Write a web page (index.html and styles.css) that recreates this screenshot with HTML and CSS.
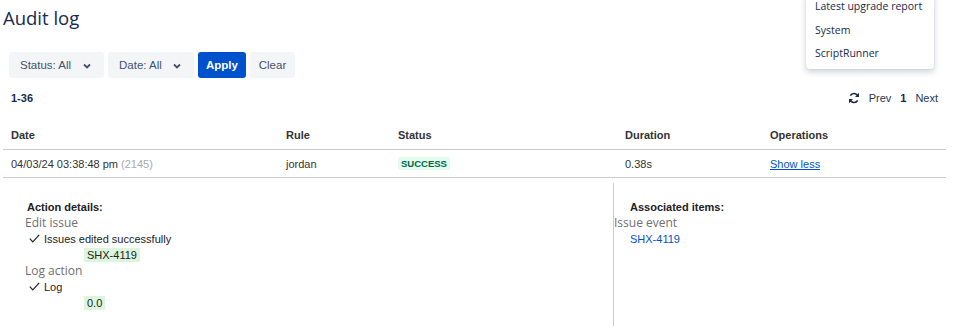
FILE: index.html
```html
<!DOCTYPE html>
<html lang="en">
<head>
    <meta charset="UTF-8">
    <meta name="viewport" content="width=device-width, initial-scale=1.0">
    <title>Audit log</title>
    <link rel="stylesheet" href="styles.css">
</head>
<body>
    <div class="page">
        <h1 class="page-title">Audit log</h1>

        <!-- Menu yang masih terbuka dari header -->
        <div class="menu">
            <div class="menu-item">Latest upgrade report</div>
            <div class="menu-item">System</div>
            <div class="menu-item">ScriptRunner</div>
        </div>

        <div class="filters">
            <button class="filter-btn status-btn">Status: All
                <svg class="chevron" width="8" height="6" viewBox="0 0 8 6"><polyline points="1,1.5 4,4.5 7,1.5" fill="none" stroke="#42526e" stroke-width="1.8"/></svg>
            </button>
            <button class="filter-btn date-btn">Date: All
                <svg class="chevron" width="8" height="6" viewBox="0 0 8 6"><polyline points="1,1.5 4,4.5 7,1.5" fill="none" stroke="#42526e" stroke-width="1.8"/></svg>
            </button>
            <button class="apply-btn">Apply</button>
            <button class="clear-btn">Clear</button>
        </div>

        <div class="pager-row">
            <span class="count">1-36</span>
            <div class="pager">
                <svg class="refresh" width="12" height="12" viewBox="0 0 12 12">
                    <path d="M10 4.2A4.3 4.3 0 0 0 2.3 3.6" fill="none" stroke="#172b4d" stroke-width="1.7"/>
                    <path d="M2 7.8A4.3 4.3 0 0 0 9.7 8.4" fill="none" stroke="#172b4d" stroke-width="1.7"/>
                    <polygon points="11,0.8 11,5 7,5" fill="#172b4d"/>
                    <polygon points="1,11.2 1,7 5,7" fill="#172b4d"/>
                </svg>
                <span>Prev</span>
                <span class="current">1</span>
                <span>Next</span>
            </div>
        </div>

        <table class="log-table">
            <colgroup>
                <col style="width: 275px">
                <col style="width: 112px">
                <col style="width: 227px">
                <col style="width: 145px">
                <col>
            </colgroup>
            <thead>
                <tr>
                    <th>Date</th>
                    <th>Rule</th>
                    <th>Status</th>
                    <th>Duration</th>
                    <th>Operations</th>
                </tr>
            </thead>
            <tbody>
                <tr>
                    <td>04/03/24 03:38:48 pm <span class="run-id">(2145)</span></td>
                    <td>jordan</td>
                    <td><span class="lozenge">Success</span></td>
                    <td>0.38s</td>
                    <td><a href="#" class="toggle-link">Show less</a></td>
                </tr>
            </tbody>
        </table>

        <div class="details">
            <div class="details-left">
                <div class="details-heading">Action details:</div>
                <div class="action-name">Edit issue</div>
                <div class="action-result">
                    <svg width="11" height="9" viewBox="0 0 11 9"><polyline points="0.8,4.6 3.8,7.8 10.2,0.8" fill="none" stroke="#222" stroke-width="1.2"/></svg>
                    <span>Issues edited successfully</span>
                </div>
                <div class="action-value"><span class="value-chip">SHX-4119</span></div>
                <div class="action-name">Log action</div>
                <div class="action-result">
                    <svg width="11" height="9" viewBox="0 0 11 9"><polyline points="0.8,4.6 3.8,7.8 10.2,0.8" fill="none" stroke="#222" stroke-width="1.2"/></svg>
                    <span>Log</span>
                </div>
                <div class="action-value"><span class="value-chip">0.0</span></div>
            </div>
            <div class="details-right">
                <div class="details-heading assoc-heading">Associated items:</div>
                <div class="action-name">Issue event</div>
                <a href="#" class="issue-link">SHX-4119</a>
            </div>
        </div>
    </div>
</body>
</html>
```

FILE: styles.css
```css
* { margin: 0; padding: 0; box-sizing: border-box; }
body {
    font-family: "Liberation Sans", Arial, sans-serif;
    font-size: 11px;
    color: #333;
    background: #fff;
}
.page { position: relative; padding: 0 14px 0 3px; }

.page-title {
    font-family: "Open Sans", "Noto Sans", sans-serif;
    font-weight: 400;
    font-size: 18.5px;
    line-height: 24px;
    color: #172b4d;
    padding-top: 6px;
}

/* menu dropdown di pojok kanan atas */
.menu {
    position: absolute;
    top: -7px;
    left: 806px;
    width: 128px;
    padding: 2px 0 3px;
    background: #fff;
    border-radius: 3px;
    box-shadow: 0 3px 6px rgba(9, 30, 66, 0.2), 0 0 1px rgba(9, 30, 66, 0.25);
}
.menu-item {
    font-family: "Open Sans", "Noto Sans", sans-serif;
    font-size: 10.5px;
    line-height: 23.5px;
    color: #172b4d;
    padding-left: 9px;
}

.filters { display: flex; gap: 4px; margin-top: 22px; padding-left: 6px; }
.filters button {
    font-family: "Liberation Sans", Arial, sans-serif;
    font-size: 11.5px;
    height: 26px;
    border: none;
    border-radius: 3px;
    cursor: pointer;
}
.filter-btn {
    display: flex;
    align-items: center;
    justify-content: space-between;
    background: #f4f5f7;
    color: #42526e;
    padding: 0 13px 0 11px;
}
.status-btn { width: 95px; }
.date-btn { width: 86px; }
.chevron { margin-top: 1px; }
.apply-btn { background: #0052cc; color: #fff; font-weight: bold; padding: 0; width: 48px; }
.clear-btn { background: #f4f5f7; color: #42526e; padding: 0; width: 45px; }

.pager-row {
    display: flex;
    justify-content: space-between;
    align-items: center;
    height: 20px;
    margin-top: 10px;
    padding-left: 8px;
}
.count { font-weight: bold; color: #172b4d; }
.pager { display: flex; align-items: center; gap: 9px; color: #253858; padding-right: 8px; }
.pager .current { font-weight: bold; color: #172b4d; }

.log-table { width: 943px; border-collapse: collapse; margin-top: 13px; table-layout: fixed; }
.log-table th, .log-table td { text-align: left; padding: 0 8px; height: 28px; vertical-align: middle; }
.log-table th { font-weight: bold; color: #333; border-bottom: 1px solid #ccc; padding-top: 1px; }
.log-table td { border-bottom: 1px solid #ccc; color: #333; padding-top: 1px; }
.run-id { color: #aaa; }
.lozenge {
    display: inline-block;
    background: #e3fcef;
    color: #006644;
    font-weight: bold;
    font-size: 9.5px;
    text-transform: uppercase;
    padding: 1px 3px 0;
    line-height: 12px;
    border-radius: 3px;
}
.toggle-link { color: #0052cc; text-decoration: underline; }

.details { display: grid; grid-template-columns: 610px 1fr; padding-top: 5px; }
.details-left { padding: 16px 0 15px 22px; }
.details-right { border-left: 1px solid #ccc; padding: 16px 0 0 0; }
.details-heading { font-weight: bold; color: #222; line-height: 16px; padding-left: 2px; font-size: 11px; }
.assoc-heading { padding-left: 16px; }
.action-name {
    font-family: "Open Sans", "Noto Sans", sans-serif;
    font-size: 12px;
    line-height: 16px;
    color: #707070;
}
.action-result { display: flex; align-items: center; gap: 4px; line-height: 16px; padding-left: 4px; color: #222; }
.action-value { line-height: 16px; padding-left: 59px; }
.value-chip { display: inline-block; background: #dcf5dc; color: #222; padding: 0 3px; line-height: 14px; }
.issue-link { display: block; color: #0052cc; text-decoration: none; line-height: 16px; padding-left: 16px; }
```
